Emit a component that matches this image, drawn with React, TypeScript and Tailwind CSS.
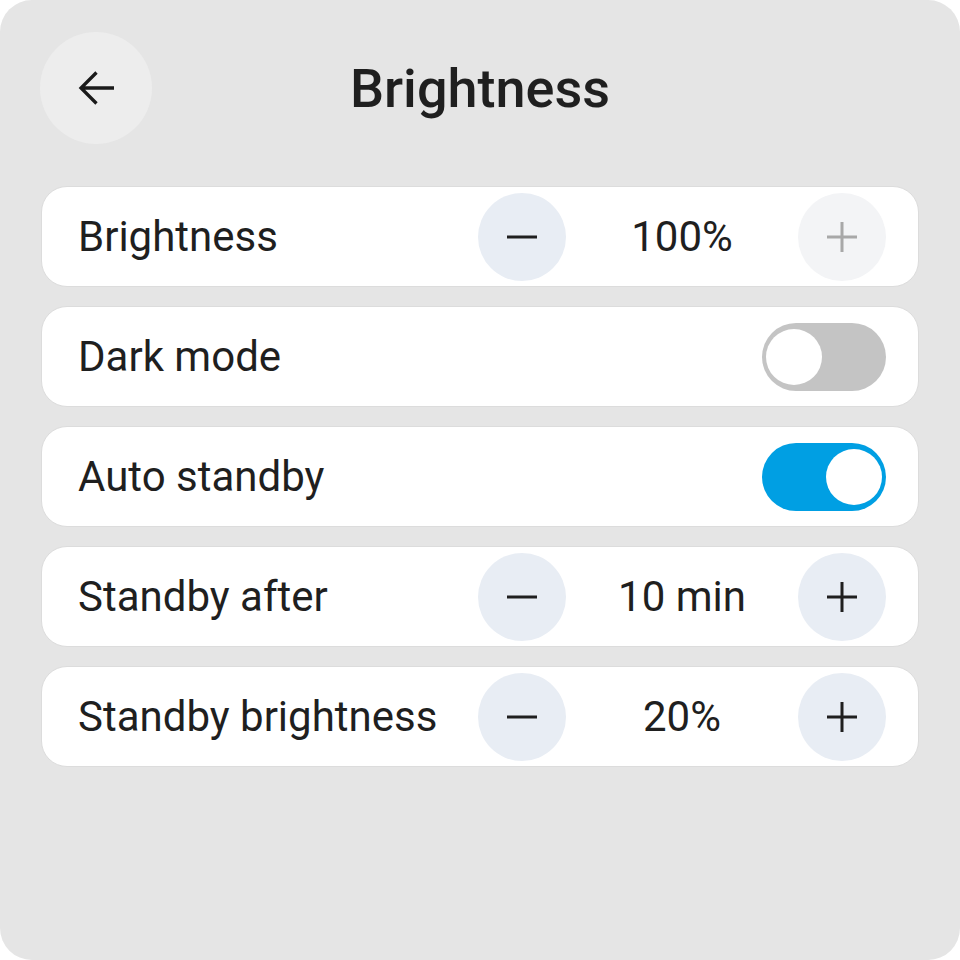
import { useState } from "react";

function Stepper({ value, minusDisabled, plusDisabled }: { value: string; minusDisabled?: boolean; plusDisabled?: boolean }) {
  return (
    <div className="flex items-center">
      <button
        className={`w-[88px] h-[88px] rounded-full flex items-center justify-center ${
          minusDisabled ? "bg-[#f3f4f6] text-[#a8a8a8]" : "bg-[#e8edf4] text-[#1f1f1f]"
        }`}
      >
        <svg width="32" height="32" viewBox="0 0 32 32">
          <path d="M1 16h30" stroke="currentColor" strokeWidth="3" />
        </svg>
      </button>
      <div className="w-[232px] text-center text-[42px] text-[#1f1f1f]">{value}</div>
      <button
        className={`w-[88px] h-[88px] rounded-full flex items-center justify-center ${
          plusDisabled ? "bg-[#f3f4f6] text-[#a8a8a8]" : "bg-[#e8edf4] text-[#1f1f1f]"
        }`}
      >
        <svg width="32" height="32" viewBox="0 0 32 32">
          <path d="M1 16h30M16 1v30" stroke="currentColor" strokeWidth="3" />
        </svg>
      </button>
    </div>
  );
}

function Toggle({ on }: { on: boolean }) {
  return (
    <div
      className={`w-[124px] h-[68px] rounded-full flex items-center p-[4px] ${
        on ? "bg-[#009fe3] justify-end" : "bg-[#c4c4c4] justify-start"
      }`}
    >
      <div className="w-[56px] h-[56px] rounded-full bg-white" />
    </div>
  );
}

function Row({ label, children }: { label: string; children: React.ReactNode }) {
  return (
    <div className="h-[101px] bg-white rounded-[26px] border border-[#dcdcdc] flex items-center justify-between pl-[36px] pr-[32px]">
      <span className="text-[42px] text-[#1f1f1f]">{label}</span>
      {children}
    </div>
  );
}

export default function App() {
  const [darkMode] = useState(false);
  const [autoStandby] = useState(true);

  return (
    <div className="w-[960px] h-[960px] bg-white" style={{ fontFamily: "Roboto, 'Liberation Sans', sans-serif" }}>
      <div className="w-full h-full bg-[#e5e5e5] rounded-[32px] px-[41px] pt-[32px]">
        <div className="relative flex items-center justify-center h-[112px]">
          <button className="absolute left-[-1px] top-0 w-[112px] h-[112px] rounded-full bg-[#ededed] flex items-center justify-center">
            <svg width="40" height="40" viewBox="0 0 40 40" fill="none" stroke="#1a1a1a" strokeWidth="3.3" strokeLinecap="butt">
              <path d="M38 20H5.5M20.5 4.5L5 20L20.5 35.5" />
            </svg>
          </button>
          <h1 className="text-[54px] font-medium text-[#1f1f1f]">Brightness</h1>
        </div>
        <div className="mt-[42px] flex flex-col gap-[19px]">
          <Row label="Brightness">
            <Stepper value="100%" plusDisabled />
          </Row>
          <Row label="Dark mode">
            <Toggle on={darkMode} />
          </Row>
          <Row label="Auto standby">
            <Toggle on={autoStandby} />
          </Row>
          <Row label="Standby after">
            <Stepper value="10 min" />
          </Row>
          <Row label="Standby brightness">
            <Stepper value="20%" />
          </Row>
        </div>
      </div>
    </div>
  );
}
